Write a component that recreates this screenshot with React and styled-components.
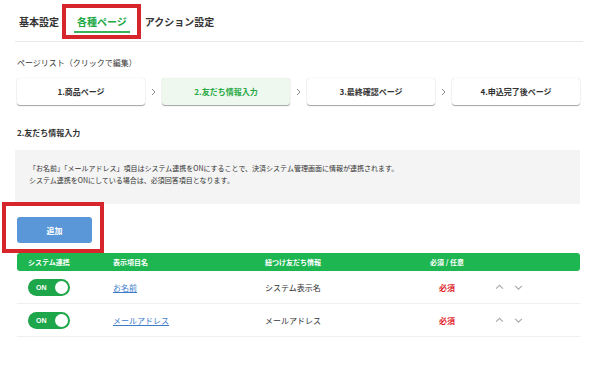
import React from "react";
import styled, { createGlobalStyle } from "styled-components";

const Global = createGlobalStyle`
  html, body { margin: 0; padding: 0; background: #fff; }
  body {
    font-family: "Noto Sans CJK JP", "Noto Sans", "Liberation Sans", sans-serif;
    color: #333;
  }
`;

const Page = styled.div`
  width: 606px;
  height: 379px;
  box-sizing: border-box;
  padding: 0 26px 0 15px;
  background: #fff;
`;

const TabBar = styled.div`
  display: flex;
  align-items: flex-end;
  gap: 12px;
  height: 41px;
  padding-left: 1px;
  margin-right: -3px;
  border-bottom: 1.5px solid #e8e8e8;
`;

const Tab = styled.div`
  position: relative;
  padding: 0 3px 2px;
  margin-bottom: 8px;
  font-size: 10px;
  line-height: 14px;
  font-weight: 700;
  color: ${(p) => (p.$active ? "#22a845" : "#333")};
  border-bottom: 2.5px solid ${(p) => (p.$active ? "#3bb35a" : "transparent")};
`;

const Highlight = styled.div`
  position: absolute;
  pointer-events: none;
  box-sizing: border-box;
  border: 4px solid #d7252c;
  left: ${(p) => p.$l}px;
  top: ${(p) => p.$t}px;
  right: ${(p) => p.$r}px;
  bottom: ${(p) => p.$b}px;
`;

const Label = styled.div`
  margin-top: ${(p) => p.$mt}px;
  padding-left: 2px;
  font-size: 8px;
  line-height: 12px;
  font-weight: ${(p) => (p.$bold ? 700 : 400)};
  color: #333;
`;

const Steps = styled.div`
  display: flex;
  align-items: center;
  margin-top: 9px;
  padding-left: 2px;
`;

const Step = styled.div`
  width: 128px;
  height: 27px;
  display: flex;
  align-items: center;
  justify-content: center;
  border-radius: 3px;
  background: ${(p) => (p.$active ? "#eef8ef" : "#fff")};
  box-shadow: 0 1px 1px rgba(0, 0, 0, 0.35), 0 0 1px rgba(0, 0, 0, 0.2);
  font-size: 8px;
  font-weight: 700;
  color: ${(p) => (p.$active ? "#27a845" : "#333")};
`;

const Sep = styled.div`
  width: 17px;
  display: flex;
  justify-content: center;
  align-items: center;
  color: #888;
`;

const InfoBox = styled.div`
  margin-top: 11px;
  height: 54px;
  box-sizing: border-box;
  padding: 12px 14px 0;
  background: #f4f4f4;
  font-size: 7px;
  line-height: 12px;
  color: #333;
`;

const ButtonWrap = styled.div`
  position: relative;
  margin: 13px 0 0 2px;
  width: 75px;
`;

const AddButton = styled.button`
  display: block;
  width: 75px;
  height: 26px;
  border: none;
  border-radius: 3px;
  background: #5a97d9;
  color: #fff;
  font-family: inherit;
  font-size: 8px;
  font-weight: 700;
  padding: 0;
`;

const Table = styled.div`
  margin: 10px 0 0 2px;
`;

const Row = styled.div`
  display: grid;
  grid-template-columns: 85px 152px 147px 70px 1fr;
  align-items: center;
  padding-left: 11px;
  height: ${(p) => (p.$head ? 18 : 32)}px;
  background: ${(p) => (p.$head ? "#1db650" : "#fff")};
  border-radius: ${(p) => (p.$head ? "3px" : "0")};
  border-bottom: ${(p) => (p.$head ? "none" : "1px solid #efefef")};
  color: ${(p) => (p.$head ? "#fff" : "#333")};
  font-size: ${(p) => (p.$head ? 7 : 8)}px;
  font-weight: ${(p) => (p.$head ? 700 : 400)};
`;

const Center = styled.div`
  text-align: center;
`;

const Required = styled.div`
  text-align: center;
  color: #e0262c;
  font-weight: 700;
`;

const LinkText = styled.a`
  color: #3d7bc9;
  text-decoration: underline;
  cursor: pointer;
`;

const Toggle = styled.div`
  width: 42px;
  height: 17px;
  border-radius: 9px;
  background: #1ea64a;
  display: flex;
  align-items: center;
  justify-content: space-between;
  box-sizing: border-box;
  padding: 0 2px 0 8px;
  color: #fff;
  font-size: 7px;
  font-weight: 700;
  font-family: "Liberation Sans", sans-serif;
`;

const Knob = styled.span`
  width: 13px;
  height: 13px;
  border-radius: 50%;
  background: #fff;
`;

const Arrows = styled.div`
  display: flex;
  gap: 10px;
  padding-left: 13px;
  align-items: center;
`;

const Chevron = ({ dir = "right", size = 7, color = "#888" }) => {
  const paths = {
    right: "M2 1 L5 4 L2 7",
    up: "M1 5 L4 2 L7 5",
    down: "M1 2.5 L4 5.5 L7 2.5",
  };
  return (
    <svg width={size + 1} height={size + 1} viewBox="0 0 8 8">
      <path d={paths[dir]} fill="none" stroke={color} strokeWidth="1" />
    </svg>
  );
};

const steps = ["1.商品ページ", "2.友だち情報入力", "3.最終確認ページ", "4.申込完了後ページ"];

const rows = [
  { name: "お名前", info: "システム表示名" },
  { name: "メールアドレス", info: "メールアドレス" },
];

export default function App() {
  return (
    <Page>
      <Global />
      <TabBar>
        <Tab>基本設定</Tab>
        <Tab $active>
          各種ページ
          <Highlight $l={-12} $t={-11} $r={-11} $b={-8} />
        </Tab>
        <Tab>アクション設定</Tab>
      </TabBar>

      <Label $mt={15}>ページリスト（クリックで編集）</Label>
      <Steps>
        {steps.map((s, i) => (
          <React.Fragment key={s}>
            {i > 0 && (
              <Sep>
                <Chevron dir="right" size={7} color="#8a8a8a" />
              </Sep>
            )}
            <Step $active={i === 1}>{s}</Step>
          </React.Fragment>
        ))}
      </Steps>

      <Label $mt={22} $bold>2.友だち情報入力</Label>
      <InfoBox>
        「お名前」「メールアドレス」項目はシステム連携をONにすることで、決済システム管理画面に情報が連携されます。
        <br />
        システム連携をONにしている場合は、必須回答項目となります。
      </InfoBox>

      <ButtonWrap>
        <AddButton>追加</AddButton>
        <Highlight $l={-15} $t={-15} $r={-12} $b={-10} />
      </ButtonWrap>

      <Table>
        <Row $head>
          <div>システム連携</div>
          <div>表示項目名</div>
          <div>紐つけ友だち情報</div>
          <Center>必須 / 任意</Center>
          <div />
        </Row>
        {rows.map((r) => (
          <Row key={r.name}>
            <Toggle>
              ON
              <Knob />
            </Toggle>
            <div>
              <LinkText>{r.name}</LinkText>
            </div>
            <div>{r.info}</div>
            <Required>必須</Required>
            <Arrows>
              <Chevron dir="up" size={8} color="#aaa" />
              <Chevron dir="down" size={8} color="#aaa" />
            </Arrows>
          </Row>
        ))}
      </Table>
    </Page>
  );
}
